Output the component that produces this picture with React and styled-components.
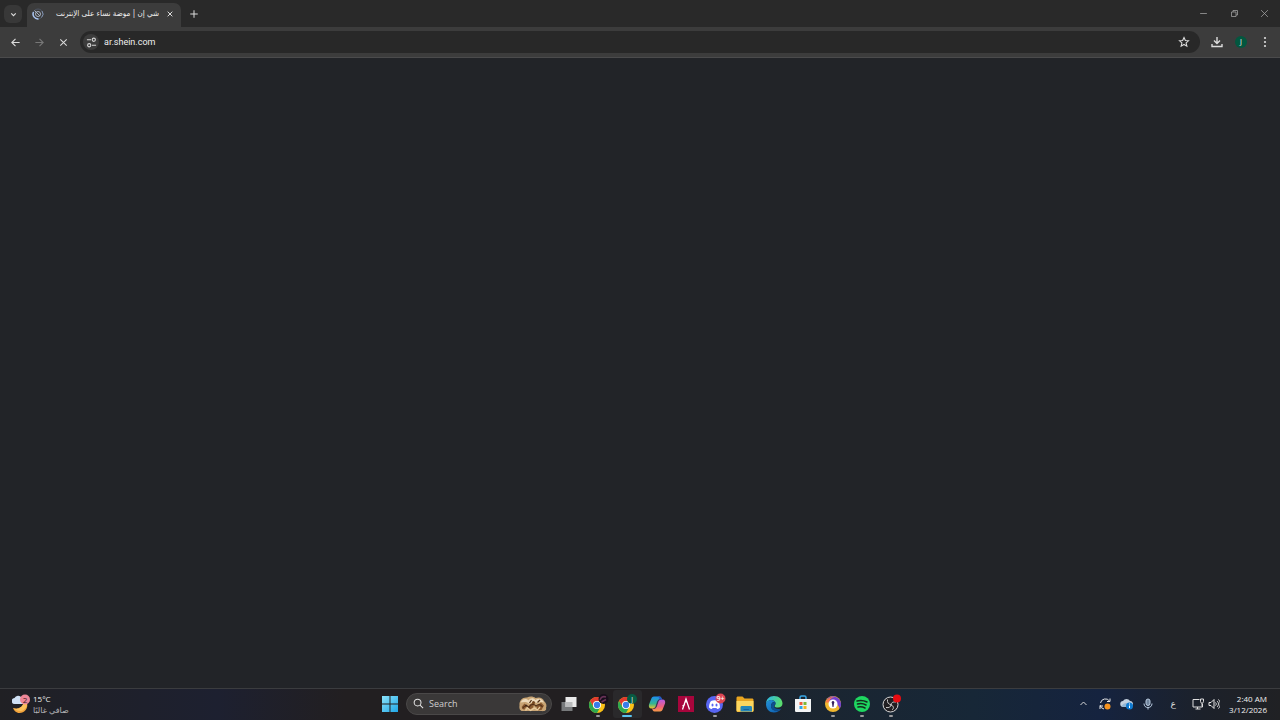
import React, { useState } from 'react'
import styled, { createGlobalStyle } from 'styled-components'

const GlobalStyle = createGlobalStyle`
   * {
      box-sizing: border-box;
   }

   html, body, #root {
      height: 100%;
   }

   body {
      margin: 0;
      background: #222428;
      color: #e6e6e6;
      font-family: "Open Sans", "DejaVu Sans", sans-serif;
      font-size: 9px;
      overflow: hidden;
   }

   button, input {
      font: inherit;
      color: inherit;
      border: 0;
      padding: 0;
      background: none;
      outline: none;
   }
`;

/* ---------- icons ---------- */

const Line = ({ size = 12, width = 2, color = 'currentColor', children }) => (
   <svg width={size} height={size} viewBox="0 0 24 24" fill="none" stroke={color} strokeWidth={width} aria-hidden="true">
      {children}
   </svg>
)

const Art = ({ size = 18, children }) => (
   <svg width={size} height={size} viewBox="0 0 36 36" aria-hidden="true">
      {children}
   </svg>
)

const SpinnerIcon = () => (
   <svg width="12" height="12" viewBox="0 0 24 24" fill="none" aria-hidden="true">
      <circle cx="12" cy="12" r="10" stroke="#4d5563" strokeWidth="2" />
      <path d="M3 8A10 10 0 0 0 13 22" stroke="#a9c4ee" strokeWidth="3" />
      <path d="M20 6A10 10 0 0 1 19 19" stroke="#8192ad" strokeWidth="2" />
      <circle cx="12" cy="12" r="5" stroke="#a8b2c2" strokeWidth="2" />
      <path d="M5 5l11 11" stroke="#a8b2c2" strokeWidth="2" />
   </svg>
)

const TuneIcon = () => (
   <Line size={11} width={2.4} color="#d5d5d5">
      <path d="M2 6h9M13 18h9" />
      <circle cx="17" cy="6" r="3.500" />
      <circle cx="7" cy="18" r="3.500" />
   </Line>
)

const WeatherIcon = () => (
   <svg width="18" height="20" viewBox="0 0 36 40" aria-hidden="true">
      <path d="M30 17c3 12-5 21-15 21C8 38 4 33 2 28c10 4 20-2 21-11z" fill="#f2a33c" />
      <path d="M30 17c1 9-4 14-11 17-7 1-12-2-17-6 10 4 20-2 21-11z" fill="#fbc15b" />
      <path d="M6 20a6 6 0 0 1-1-12 8 8 0 0 1 14-1 7 7 0 0 1 2 13z" fill="#cfe0f4" />
      <circle cx="26" cy="11" r="10" fill="#ee8798" />
      <text x="26" y="17" textAnchor="middle" fontSize="16" fill="#3a1a22">2</text>
   </svg>
)

const WindowsIcon = () => (
   <svg width="16" height="16" viewBox="0 0 32 32" aria-hidden="true">
      <defs>
         <linearGradient id="win" x2="1" y2="1">
            <stop stopColor="#8be3fb" />
            <stop offset="1" stopColor="#1fa6e6" />
         </linearGradient>
      </defs>
      <path d="M0 0h15v15H0zM17 0h15v15H17zM0 17h15v15H0zM17 17h15v15H17z" fill="url(#win)" />
   </svg>
)

const ReliefArt = () => (
   <svg width="30" height="16" viewBox="0 0 60 32" aria-hidden="true">
      <path d="M3 19C2 9 9 2 18 3c6-3 13-2 17 1 8-3 15 0 17 6 5 4 6 10 4 14 2 5-4 7-9 6H9c-5 0-7-5-6-11z" fill="#c9a575" />
      <path d="M5 13C9 5 17 4 21 9c4-6 10-6 14-1 7-5 14-1 17 5-5-2-9-1-12 2-6-4-12-3-16 1-6-5-12-5-19-3z" fill="#eddabb" />
      <path d="M7 22l6-7 5 5-6 8zM20 24c2-7 7-11 13-10l-3 9-6 4zM37 20l9-7 6 6-5 9-9 1z" fill="#8a5a30" />
      <path d="M9 25c4-7 9-7 13-2 3-7 9-8 14-3 5-5 10-3 13 2M27 8l-4 6M44 8l-5 5" fill="none" stroke="#543219" strokeWidth="2.500" />
      <path d="M15 29l4-5 6 5 8-5 6 4 5-6" fill="none" stroke="#e8cc9f" strokeWidth="2.500" />
      <circle cx="31" cy="13" r="3" fill="#734620" />
      <circle cx="16" cy="19" r="2" fill="#3f2615" />
   </svg>
)

const TaskViewIcon = () => (
   <Art>
      <path d="M3 14h22v18H3z" fill="#77797b" />
      <path d="M11 4h22v20H11z" fill="#e9e9e9" />
      <path d="M11 14h14v10H11z" fill="#b9babb" />
   </Art>
)

const ChromeIcon = ({ children }) => (
   <svg width="22" height="22" viewBox="-3 -3 44 44" aria-hidden="true">
      <circle cx="17" cy="21" r="16" fill="#fbc116" />
      <path d="M3.100 13A16 16 0 0 1 30.900 13H17a8 8 0 0 0-6.900 12z" fill="#e33b2e" />
      <path d="M3.100 13A16 16 0 0 0 17 37l6.900-12a8 8 0 0 1-13.800 0z" fill="#2da94f" />
      <circle cx="17" cy="21" r="8" fill="#fff" />
      <circle cx="17" cy="21" r="6.300" fill="#3a7de8" />
      {children}
   </svg>
)

const CopilotIcon = () => (
   <Art>
      <defs>
         <linearGradient id="cp1" x2="0" y2="1">
            <stop stopColor="#1b8df0" />
            <stop offset=".6" stopColor="#36b48f" />
            <stop offset="1" stopColor="#f0c52c" />
         </linearGradient>
         <linearGradient id="cp2" x2="0" y2="1">
            <stop stopColor="#b45be4" />
            <stop offset=".6" stopColor="#f0607c" />
            <stop offset="1" stopColor="#f79a45" />
         </linearGradient>
      </defs>
      <path d="M12 3h11c3 0 4 3 5 6h-3c-3 0-4 2-5 5l-3 9c-1 3-3 4-6 4H7c-5 0-6-4-5-8l4-10c1-4 3-6 6-6z" fill="url(#cp1)" />
      <path d="M24 33H13c-3 0-4-3-5-6h3c3 0 4-2 5-5l3-9c1-3 3-4 6-4h4c5 0 6 4 5 8l-4 10c-1 4-3 6-6 6z" fill="url(#cp2)" />
      <path d="M20 14l-3 9c-1 3-3 4-6 4 3 0 4-2 5-5l3-9c1-3 3-4 6-4-3 0-4 2-5 5z" fill="#24304d" stroke="#24304d" strokeWidth="1" />
      <path d="M12 3h11c3 0 4 3 5 6h-5c0-3-1-5-4-6z" fill="#2756c9" />
   </Art>
)

const ArmouryIcon = () => (
   <Art>
      <path d="M2 2h32v32H2z" fill="#a8053c" />
      <path d="M11 29l7-21 7 21M18 8v7M11 22l5-3" fill="none" stroke="#fff" strokeWidth="2.500" />
   </Art>
)

const DiscordIcon = () => (
   <svg width="22" height="22" viewBox="-3 -1 44 44" aria-hidden="true">
      <circle cx="18" cy="22" r="17" fill="#5865f2" />
      <path d="M11 15c5-2 9-2 14 0 3 4 4 9 4 13-2 2-4 3-6 3l-1-2h-8l-1 2c-2 0-4-1-6-3 0-4 1-9 4-13z" fill="#fff" />
      <ellipse cx="14" cy="23" rx="2" ry="3" fill="#5865f2" />
      <ellipse cx="22" cy="23" rx="2" ry="3" fill="#5865f2" />
      <circle cx="30" cy="10" r="10" fill="#dc4654" />
      <text x="30" y="15" textAnchor="middle" fontSize="14" fontWeight="600" fill="#fff">9+</text>
   </svg>
)

const FolderIcon = () => (
   <Art>
      <path d="M1 6c0-2 1-3 3-3h9l4 4h15c2 0 3 1 3 3v21c0 2-1 3-3 3H4c-2 0-3-1-3-3z" fill="#e9a520" />
      <path d="M1 12h34v18c0 2-1 3-3 3H4c-2 0-3-1-3-3z" fill="#fbd65f" />
      <path d="M9 33v-8c0-2 1-3 3-3h17c2 0 3 1 3 3v8z" fill="#2587b9" />
      <path d="M15 29h11" stroke="#17639f" strokeWidth="2" />
   </Art>
)

const EdgeIcon = () => (
   <Art>
      <defs>
         <linearGradient id="edge1" x2="1" y2=".3">
            <stop stopColor="#2ab5ee" />
            <stop offset="1" stopColor="#59dc70" />
         </linearGradient>
         <linearGradient id="edge2" x2="1" y2="1">
            <stop stopColor="#2492d7" />
            <stop offset="1" stopColor="#0b5bad" />
         </linearGradient>
      </defs>
      <path d="M2 18C2 8 9 2 18 2c10 0 17 7 17 15 0 5-4 8-9 8-4 0-7-1-7-3 0-1 2-2 2-5 0-4-4-7-8-7-6 0-10 4-11 8z" fill="url(#edge1)" />
      <path d="M2 18c1-5 5-8 11-8 3 0 6 2 7 4-5-1-8 3-8 8 0 7 7 10 13 9 3 0 5-2 7-3-3 4-8 7-14 7C9 35 2 28 2 18z" fill="url(#edge2)" />
      <path d="M20 14c-5 0-8 4-8 8 0 7 8 11 14 9 3-1 5-2 7-4-8 3-15 0-15-5 0-2 3-3 3-5 0-1 0-2-1-3z" fill="#0c4e92" />
   </Art>
)

const StoreIcon = () => (
   <Art>
      <path d="M12 10V5c0-2 1-3 3-3h6c2 0 3 1 3 3v5" fill="none" stroke="#39a9e8" strokeWidth="3" />
      <path d="M2 8h32v23c0 2-1 3-3 3H5c-2 0-3-1-3-3z" fill="#f3f5f6" />
      <path d="M11 14h6v6h-6z" fill="#ef5a3c" />
      <path d="M19 14h6v6h-6z" fill="#7db83b" />
      <path d="M11 22h6v6h-6z" fill="#2aa4e6" />
      <path d="M19 22h6v6h-6z" fill="#f8b624" />
   </Art>
)

const AvastIcon = () => (
   <Art>
      <circle cx="18" cy="18" r="16" fill="#f0b72f" />
      <path d="M6 8A16 16 0 0 1 33 13c2 6 1 11-2 14-2-8-8-12-15-12C11 14 8 12 6 8z" fill="#7341d1" />
      <path d="M3 15c3-8 9-11 18-11-7 2-10 5-11 11z" fill="#f9774b" />
      <circle cx="18" cy="18" r="9" fill="#fff" />
      <path d="M18 12a3 3 0 0 1 2 5l-1 7h-2l-1-7a3 3 0 0 1 2-5z" fill="#37205f" />
   </Art>
)

const SpotifyIcon = () => (
   <Art>
      <circle cx="18" cy="18" r="16" fill="#1ed760" />
      <path d="M8 12c7-2 14-1 20 2M9 18c6-2 12-1 17 2M10 24c5-1 9-1 14 2" fill="none" stroke="#142b1d" strokeWidth="3" strokeLinecap="round" />
   </Art>
)

const ObsIcon = () => (
   <svg width="22" height="22" viewBox="-3 -1 44 44" aria-hidden="true">
      <circle cx="18" cy="22" r="15" fill="#211f22" stroke="#d8d8d8" strokeWidth="2" />
      <path d="M12 12c-1 6 2 10 7 10M29 17c-6-1-10 1-10 7M9 28c6 1 10-1 10-6M21 33c4-3 4-8-2-10" fill="none" stroke="#c9c9c9" strokeWidth="2" />
      <circle cx="31" cy="10" r="8" fill="#e80c12" />
   </svg>
)

const SyncIcon = () => (
   <svg width="14" height="14" viewBox="0 0 28 28" fill="none" aria-hidden="true">
      <path d="M5 12a10 10 0 0 1 18-4M24 3v6h-6M4 16a10 10 0 0 0 8 8M4 24v-6h6" stroke="#e8e8e8" strokeWidth="2" />
      <circle cx="19" cy="19" r="6" fill="#f79420" />
   </svg>
)

const CloudIcon = () => (
   <svg width="14" height="14" viewBox="0 0 28 28" aria-hidden="true">
      <path d="M7 20a6 6 0 0 1-1-12 8 8 0 0 1 14 0c4 0 6 3 6 6 0 4-3 6-5 6z" fill="#c4d1de" />
      <path d="M3 18c3-5 8-7 13-6v8H7c-2 0-3-1-4-2z" fill="#93b5d3" />
      <circle cx="19" cy="18" r="7" fill="#0f7ad0" />
      <path d="M19 17v5M19 13v2" stroke="#fff" strokeWidth="2" />
   </svg>
)

const MonitorIcon = () => (
   <svg width="14" height="14" viewBox="0 0 28 28" fill="none" stroke="#dedede" strokeWidth="2" aria-hidden="true">
      <path d="M17 5H4v15h19v-6M9 24h10M13 20v4" />
      <path d="M19 4h6v5c0 2-1 3-3 3s-3-1-3-3zM22 12v7" />
   </svg>
)

/* ---------- browser ---------- */

const Screen = styled.div`
   display: flex;
   flex-direction: column;
   min-height: 100vh;
`;

const TabStrip = styled.header`
   display: flex;
   align-items: flex-end;
   height: 27px;
   padding-left: 4px;
   background: #292929;
`;

const IconButton = styled.button`
   display: flex;
   align-items: center;
   justify-content: center;
   flex: none;
   width: ${({ $w }) => $w || 24}px;
   height: ${({ $h }) => $h || 24}px;
   color: ${({ $color }) => $color || '#dcdcdc'};
   background: ${({ $bg }) => $bg || 'none'};
   border-radius: ${({ $round }) => $round || 0}px;
`;

const TabSearch = styled(IconButton)`
   margin: 0 5px 4px 0;
`;

const Tab = styled.div`
   display: flex;
   align-items: center;
   width: 154px;
   height: 24px;
   padding: 0 2px 2px 5px;
   border-radius: 7px 7px 0 0;
   background: #3c3c3c;
`;

const TabTitle = styled.span`
   flex: 1;
   margin: 0 2px 0 3px;
   overflow: hidden;
   white-space: nowrap;
   direction: rtl;
   font-family: "DejaVu Sans Condensed", "DejaVu Sans", sans-serif;
   font-size: 8px;
   line-height: 14px;
   color: #f0f0f0;
`;

const WindowButtons = styled.div`
   display: flex;
   align-self: stretch;
   margin-left: auto;
`;

const Toolbar = styled.nav`
   display: flex;
   align-items: center;
   height: 31px;
   padding: 0 3px;
   background: #3c3c3c;
   border-bottom: 1px solid #4b4b4c;
`;

const AddressBar = styled.form`
   display: flex;
   flex: 1;
   align-items: center;
   height: 22px;
   margin: 0 5px;
   padding: 0 4px 0 3px;
   border-radius: 11px;
   background: #282828;
`;

const AddressInput = styled.input`
   flex: 1;
   min-width: 0;
   height: 18px;
   margin-left: 5px;
   font-family: Roboto, sans-serif;
   font-size: 9px;
   color: #f0f0f0;
`;

const Avatar = styled.span`
   width: 12px;
   height: 12px;
   border-radius: 50%;
   background: #03573f;
   color: #fff;
   font-size: 7px;
   line-height: 12px;
   text-align: center;
`;

const Page = styled.main`
   flex: 1;
   background: #222428;
`;

/* ---------- taskbar ---------- */

const TaskbarWrap = styled.footer`
   display: grid;
   grid-template-columns: 1fr auto 1fr;
   align-items: center;
   height: 32px;
   padding-bottom: 2px;
   border-top: 1px solid #3b3c3f;
   background: linear-gradient(90deg, #202024 0%, #1d2030 17%, #221f21 27%, #221f21 52%, #1b2530 62%, #172737 76%, #15233f 86%, #1c212a 94%, #202124 100%);
`;

const Weather = styled.button`
   display: flex;
   align-items: center;
   justify-self: start;
   gap: 3px;
   margin-left: 12px;
   text-align: left;
`;

const SmallText = styled.span`
   display: block;
   font-size: 8px;
   line-height: 11px;
   color: ${({ $dim }) => $dim ? '#b4b4b6' : '#f0f0f0'};
`;

const Center = styled.div`
   display: flex;
   align-items: center;
   gap: 2px;
   margin-left: 1px;
`;

const SearchBox = styled.label`
   display: flex;
   align-items: center;
   width: 146px;
   height: 22px;
   padding: 0 3px 0 6px;
   border: 1px solid #4a4848;
   border-radius: 11px;
   background: #3a3838;
`;

const SearchInput = styled.input`
   flex: 1;
   min-width: 0;
   margin-left: 5px;

   &::placeholder {
      color: #cfcfcf;
      opacity: 1;
   }
`;

const Apps = styled.div`
   display: grid;
   grid-template-columns: repeat(12, 1fr);
   width: 352px;
`;

const AppButton = styled.button`
   display: flex;
   align-items: center;
   justify-content: center;
   position: relative;
   height: 28px;
   border-radius: 3px;
   background: ${({ $active }) => $active ? '#2a292b' : 'none'};

   &::after {
      content: '';
      display: ${({ $running }) => $running ? 'block' : 'none'};
      position: absolute;
      bottom: 1px;
      width: ${({ $active }) => $active ? 10 : 4}px;
      height: 2px;
      border-radius: 1px;
      background: ${({ $active }) => $active ? '#5ac3f0' : '#9a9a9c'};
   }
`;

const Tray = styled.div`
   display: flex;
   align-items: center;
   justify-self: end;
   margin-right: 13px;
`;

const TrayGroup = styled.button`
   display: flex;
   align-items: center;
   gap: 3px;
   margin: 0 9px 0 3px;
`;

const Clock = styled.button`
   text-align: right;
`;

const apps = [
   { name: 'Task view', icon: <TaskViewIcon /> },
   {
      name: 'Chrome',
      running: true,
      icon: (
         <ChromeIcon>
            <circle cx="30" cy="9" r="10" fill="#170f1b" />
            <path d="M23 11c2-6 6-8 12-6M26 15l9-5" stroke="#693257" strokeWidth="3" fill="none" />
         </ChromeIcon>
      )
   },
   {
      name: 'Chrome, profile J',
      running: true,
      active: true,
      icon: (
         <ChromeIcon>
            <circle cx="29" cy="9" r="10" fill="#075b43" />
            <text x="29" y="14" textAnchor="middle" fontSize="13" fill="#fff">J</text>
         </ChromeIcon>
      )
   },
   { name: 'Copilot', icon: <CopilotIcon /> },
   { name: 'Armoury', icon: <ArmouryIcon /> },
   { name: 'Discord', running: true, icon: <DiscordIcon /> },
   { name: 'File Explorer', icon: <FolderIcon /> },
   { name: 'Edge', icon: <EdgeIcon /> },
   { name: 'Microsoft Store', icon: <StoreIcon /> },
   { name: 'Secure Browser', running: true, icon: <AvastIcon /> },
   { name: 'Spotify', running: true, icon: <SpotifyIcon /> },
   { name: 'OBS Studio', running: true, icon: <ObsIcon /> },
]

function Browser() {
   const [url, setUrl] = useState('ar.shein.com')

   return (
      <>
         <TabStrip>
            <TabSearch $w={18} $h={18} $bg="#383838" $round={6} aria-label="Search tabs">
               <Line size={9} width={3}><path d="M6 9l6 6 6-6" /></Line>
            </TabSearch>
            <Tab>
               <SpinnerIcon />
               <TabTitle lang="ar">شي إن | موضة نساء على الإنترنت</TabTitle>
               <IconButton $w={18} $h={18} aria-label="Close tab">
                  <Line size={8} width={3}><path d="M5 5l14 14M19 5L5 19" /></Line>
               </IconButton>
            </Tab>
            <IconButton $w={26} $h={26} aria-label="New tab">
               <Line size={10} width={2.4}><path d="M12 3v18M3 12h18" /></Line>
            </IconButton>
            <WindowButtons>
               <IconButton $w={31} $h={27} $color="#a5a5a5" aria-label="Minimize">
                  <Line size={9}><path d="M3 12h18" /></Line>
               </IconButton>
               <IconButton $w={30} $h={27} $color="#a5a5a5" aria-label="Restore">
                  <Line size={9}><path d="M4 8h12v12H4zM8 8V4h12v12h-4" /></Line>
               </IconButton>
               <IconButton $w={31} $h={27} $color="#a5a5a5" aria-label="Close">
                  <Line size={9}><path d="M3 3l18 18M21 3L3 21" /></Line>
               </IconButton>
            </WindowButtons>
         </TabStrip>
         <Toolbar>
            <IconButton aria-label="Back">
               <Line size={11} width={2.4}><path d="M21 12H4M12 4l-8 8 8 8" /></Line>
            </IconButton>
            <IconButton $color="#777" aria-label="Forward">
               <Line size={11} width={2.4}><path d="M3 12h17M12 4l8 8-8 8" /></Line>
            </IconButton>
            <IconButton aria-label="Stop loading">
               <Line size={11} width={2.2}><path d="M5 5l14 14M19 5L5 19" /></Line>
            </IconButton>
            <AddressBar onSubmit={e => e.preventDefault()}>
               <IconButton type="button" $w={16} $h={16} $bg="#3c3c3c" $round={8} aria-label="Site information">
                  <TuneIcon />
               </IconButton>
               <AddressInput aria-label="Address" value={url} onChange={e => setUrl(e.target.value)} />
               <IconButton type="button" aria-label="Bookmark this tab">
                  <Line size={12} width={2.2}>
                     <path d="M12 3l2.700 6 6.300.600-4.800 4.300 1.500 6.500L12 17l-5.700 3.400 1.500-6.500L3 9.600 9.300 9z" />
                  </Line>
               </IconButton>
            </AddressBar>
            <IconButton aria-label="Downloads">
               <Line size={12} width={2.8}><path d="M12 2v13M6 9l6 6 6-6M2 16v5h20v-5" /></Line>
            </IconButton>
            <IconButton aria-label="Profile">
               <Avatar>J</Avatar>
            </IconButton>
            <IconButton aria-label="Menu">
               <svg width="12" height="12" viewBox="0 0 24 24" fill="currentColor" aria-hidden="true">
                  <circle cx="12" cy="4" r="2.200" />
                  <circle cx="12" cy="12" r="2.200" />
                  <circle cx="12" cy="20" r="2.200" />
               </svg>
            </IconButton>
         </Toolbar>
      </>
   )
}

function Taskbar() {
   const [query, setQuery] = useState('')

   return (
      <TaskbarWrap>
         <Weather>
            <WeatherIcon />
            <span>
               <SmallText>15°C</SmallText>
               <SmallText $dim lang="ar">صافي غالبًا</SmallText>
            </span>
         </Weather>
         <Center>
            <IconButton $w={29} $h={28} aria-label="Start">
               <WindowsIcon />
            </IconButton>
            <SearchBox>
               <Line size={11} width={2.2}>
                  <circle cx="10" cy="10" r="7.500" />
                  <path d="M15.500 15.500L22 22" />
               </Line>
               <SearchInput
                  aria-label="Search"
                  placeholder="Search"
                  value={query}
                  onChange={e => setQuery(e.target.value)}
               />
               <ReliefArt />
            </SearchBox>
            <Apps>
               {apps.map(app => (
                  <AppButton key={app.name} aria-label={app.name} $running={app.running} $active={app.active}>
                     {app.icon}
                  </AppButton>
               ))}
            </Apps>
         </Center>
         <Tray>
            <IconButton $w={21} aria-label="Show hidden icons">
               <Line size={9} width={2.6}><path d="M4 16l8-8 8 8" /></Line>
            </IconButton>
            <IconButton $w={22} aria-label="Sync"><SyncIcon /></IconButton>
            <IconButton $w={21} aria-label="OneDrive"><CloudIcon /></IconButton>
            <IconButton $w={21} $color="#b9cbe0" aria-label="Microphone">
               <Line size={12}>
                  <rect x="8" y="2" width="8" height="13" rx="4" fill="#71859d" />
                  <path d="M4 11c0 5 3 8 8 8s8-3 8-8M12 19v4" />
               </Line>
            </IconButton>
            <IconButton $w={30} aria-label="Keyboard language">ع</IconButton>
            <TrayGroup aria-label="Network and volume">
               <MonitorIcon />
               <Line size={12} width={2}>
                  <path d="M2 9h4l6-6v18l-6-6H2zM15 9c2 2 2 4 0 6M18 6c4 4 4 8 0 12M21 3c5 6 5 12 0 18" />
               </Line>
            </TrayGroup>
            <Clock>
               <SmallText>2:40 AM</SmallText>
               <SmallText>3/12/2026</SmallText>
            </Clock>
         </Tray>
      </TaskbarWrap>
   )
}

function App() {
   return (
      <>
         <GlobalStyle />
         <Screen>
            <Browser />
            <Page />
            <Taskbar />
         </Screen>
      </>
   )
}

export default App
